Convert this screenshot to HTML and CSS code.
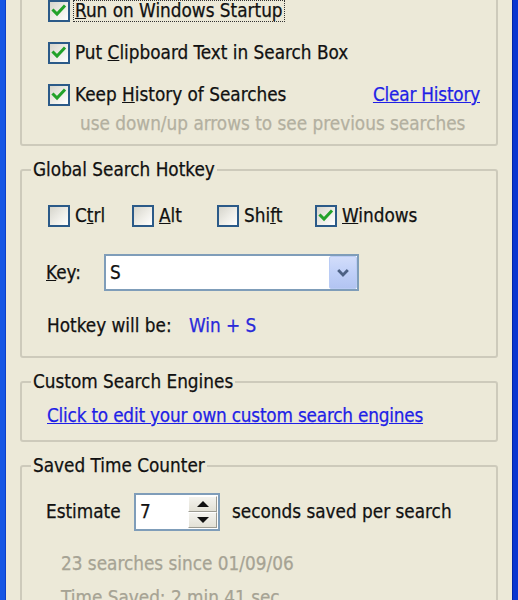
FILE: index.html
```html
<!DOCTYPE html>
<html>
<head>
<meta charset="utf-8">
<link rel="stylesheet" href="styles.css">
</head>
<body>
<div class="window">
  <div class="content">
    <fieldset class="group group-options">
      <div class="group-body body-options">
        <div class="row">
          <span class="cb checked"><svg viewBox="0 0 18 18"><polyline points="3.5,8.5 7,12 14,4.5"/></svg></span>
          <span class="lbl focus"><u>R</u>un on Windows Startup</span>
        </div>
        <div class="row">
          <span class="cb checked"><svg viewBox="0 0 18 18"><polyline points="3.5,8.5 7,12 14,4.5"/></svg></span>
          <span class="lbl">Put <u>C</u>lipboard Text in Search Box</span>
        </div>
        <div class="row row-split">
          <span class="row-left">
            <span class="cb checked"><svg viewBox="0 0 18 18"><polyline points="3.5,8.5 7,12 14,4.5"/></svg></span>
            <span class="lbl">Keep <u>H</u>istory of Searches</span>
          </span>
          <a class="link">Clear History</a>
        </div>
        <div class="hint">use down/up arrows to see previous searches</div>
      </div>
    </fieldset>

    <fieldset class="group">
      <legend class="legend">Global Search Hotkey</legend>
      <div class="group-body body-hotkey">
        <div class="mods">
          <span class="mod"><span class="cb"></span><span class="lbl">C<u>t</u>rl</span></span>
          <span class="mod"><span class="cb"></span><span class="lbl"><u>A</u>lt</span></span>
          <span class="mod"><span class="cb"></span><span class="lbl">Shi<u>f</u>t</span></span>
          <span class="mod"><span class="cb checked"><svg viewBox="0 0 18 18"><polyline points="3.5,8.5 7,12 14,4.5"/></svg></span><span class="lbl"><u>W</u>indows</span></span>
        </div>
        <div class="key-row">
          <span class="key-label"><u>K</u>ey:</span>
          <span class="combo">
            <span class="combo-text">S</span>
            <span class="combo-btn"><svg viewBox="0 0 27 32"><polyline points="8.5,13.5 13.5,18.5 18.5,13.5"/></svg></span>
          </span>
        </div>
        <div class="hotkey-row">
          <span class="hotkey-label">Hotkey will be:</span>
          <span class="hotkey-value">Win + S</span>
        </div>
      </div>
    </fieldset>

    <fieldset class="group">
      <legend class="legend">Custom Search Engines</legend>
      <div class="group-body body-custom">
        <a class="link">Click to edit your own custom search engines</a>
      </div>
    </fieldset>

    <fieldset class="group">
      <legend class="legend">Saved Time Counter</legend>
      <div class="group-body body-time">
        <div class="estimate-row">
          <span class="est-label">Estimate</span>
          <span class="spin">
            <span class="spin-text">7</span>
            <span class="spin-btns">
              <span class="spin-btn"><span class="tri-up"></span></span>
              <span class="spin-btn"><span class="tri-down"></span></span>
            </span>
          </span>
          <span class="est-after">seconds saved per search</span>
        </div>
        <div class="stat stat-first">23 searches since 01/09/06</div>
        <div class="stat">Time Saved: 2 min 41 sec</div>
      </div>
    </fieldset>
  </div>
</div>
</body>
</html>
```

FILE: styles.css
```css
html, body {
  margin: 0;
  padding: 0;
  background: #ECE9D8;
}

body {
  font-family: "DejaVu Sans Condensed", "DejaVu Sans", sans-serif;
  font-stretch: condensed;
  font-size: 18.8px;
  line-height: 20px;
  color: #111;
  -webkit-text-stroke: 0.25px currentColor;
}

.window {
  box-sizing: border-box;
  height: 600px;
  overflow: hidden;
  background: #ECE9D8;
  border-left: 5px solid #1656E4;
  border-right: 5px solid #0A36D0;
  box-shadow: inset 1px 0 0 #0B3FC8, inset -1px 0 0 #0024A8;
}

.content {
  padding: 0 15px;
}

.group {
  margin: 0 0 14px 0;
  padding: 0;
  border: 2px solid #CDCABB;
  border-radius: 3px;
  min-width: 0;
}

.group-options {
  margin-top: -20px;
}

.legend {
  margin-left: 9px;
  padding: 0 2px;
  line-height: 20px;
}

.group-body {
  padding-left: 26px;
  padding-right: 16px;
}

.body-options {
  padding-top: 8px;
  padding-bottom: 10px;
}

.row {
  height: 42px;
  display: flex;
  align-items: center;
}

.row-split {
  justify-content: space-between;
}

.row-left {
  display: flex;
  align-items: center;
}

.cb {
  box-sizing: border-box;
  width: 22px;
  height: 22px;
  flex: none;
  border: 2px solid #2B5A88;
  background: linear-gradient(135deg, #D6D5CC 0%, #EFEEE8 55%, #FFFFFF 100%);
  display: inline-flex;
}

.cb svg {
  width: 18px;
  height: 18px;
}

.cb polyline {
  fill: none;
  stroke: #22A22A;
  stroke-width: 3;
  stroke-linecap: square;
}

.lbl {
  margin-left: 3px;
  padding: 0 1px;
  border: 1px dotted transparent;
  line-height: 20px;
}

.lbl.focus {
  border-color: #333;
}

.link {
  color: #1F1FE6;
  text-decoration: underline;
  letter-spacing: -0.2px;
  cursor: pointer;
}

.hint {
  margin-top: -2px;
  padding-left: 32px;
  color: #B3B0A0;
  line-height: 20px;
}

/* hotkey group */
.body-hotkey {
  padding-bottom: 20px;
}

.mods {
  margin-top: 21px;
  height: 30px;
  display: grid;
  grid-template-columns: 84px 85px 98px auto;
  align-items: center;
}

.mod {
  display: flex;
  align-items: center;
}

.key-row {
  margin-top: 23px;
  display: flex;
  align-items: center;
}

.key-label {
  width: 58px;
  margin-left: -2px;
}

.combo {
  box-sizing: border-box;
  width: 255px;
  height: 37px;
  border: 2px solid #7F9DB9;
  background: #fff;
  display: flex;
  align-items: stretch;
}

.combo-text {
  flex: 1;
  padding-left: 4px;
  display: flex;
  align-items: center;
}

.combo-btn {
  width: 26px;
  border: 1px solid #BACCF5;
  border-radius: 2px;
  background: linear-gradient(180deg, #D2DDFA 0%, #C0D0F8 50%, #B2C4F2 100%);
  display: flex;
}

.combo-btn svg {
  width: 100%;
  height: 100%;
}

.combo-btn polyline {
  fill: none;
  stroke: #4D6185;
  stroke-width: 3;
}

.hotkey-row {
  margin-top: 25px;
  display: flex;
  margin-left: -1px;
}

.hotkey-label {
  width: 142px;
}

.hotkey-value {
  color: #2A2ADA;
}

/* custom engines */
.body-custom {
  padding-left: 25px;
  padding-top: 14px;
  padding-bottom: 14px;
}

/* time counter */
.body-time {
  padding-top: 17px;
  padding-bottom: 20px;
}

.estimate-row {
  display: flex;
  align-items: center;
  margin-left: -2px;
}

.est-label {
  width: 88px;
}

.spin {
  box-sizing: border-box;
  width: 86px;
  height: 38px;
  border: 2px solid #7F9DB9;
  background: #fff;
  display: flex;
  align-items: stretch;
  padding: 1px;
}

.spin-text {
  flex: 1;
  padding-left: 3px;
  display: flex;
  align-items: center;
}

.spin-btns {
  width: 29px;
  display: flex;
  flex-direction: column;
}

.spin-btn {
  flex: 1;
  background: linear-gradient(180deg, #F4F3EE 0%, #E3E1D6 100%);
  border-top: 1px solid #FFFFFF;
  border-left: 1px solid #FFFFFF;
  border-right: 1px solid #9D9C93;
  border-bottom: 1px solid #9D9C93;
  display: flex;
  align-items: center;
  justify-content: center;
}

.tri-up {
  width: 0;
  height: 0;
  border-left: 6px solid transparent;
  border-right: 6px solid transparent;
  border-bottom: 6px solid #111;
}

.tri-down {
  width: 0;
  height: 0;
  border-left: 6px solid transparent;
  border-right: 6px solid transparent;
  border-top: 6px solid #111;
}

.est-after {
  margin-left: 12px;
}

.stat {
  color: #A6A394;
  padding-left: 13px;
  margin-top: 14px;
}

.stat-first {
  margin-top: 23px;
}
```
